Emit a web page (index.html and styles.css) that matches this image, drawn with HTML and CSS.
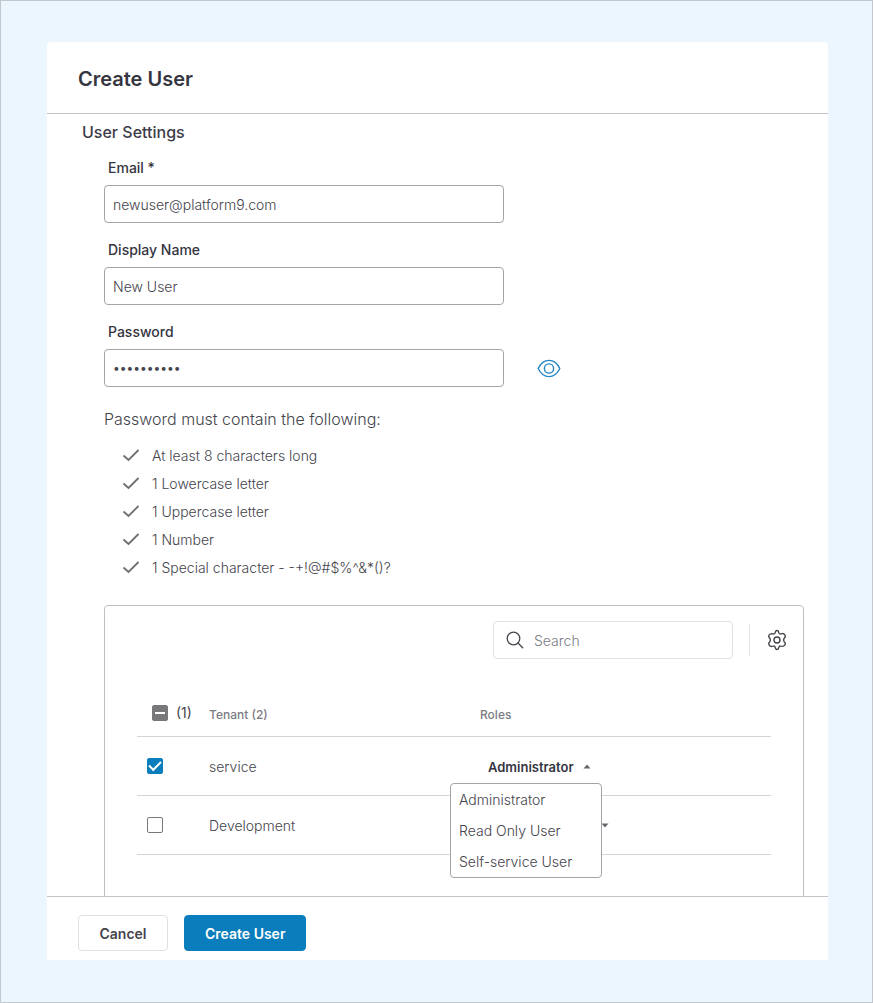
FILE: index.html
```html
<!DOCTYPE html>
<html lang="en">

<head>
  <meta charset="UTF-8" />
  <meta name="viewport" content="width=device-width, initial-scale=1.0" />
  <title>Create User</title>
  <link rel="stylesheet" href="styles.css">
</head>

<body>
  <form class="dialog">
    <header class="dialog-header">
      <h1>Create User</h1>
    </header>

    <main class="dialog-body">
      <h2>User Settings</h2>

      <div class="settings">
        <div class="field">
          <label for="email">Email *</label>
          <input type="email" id="email" value="newuser@platform9.com" required />
        </div>
        <div class="field">
          <label for="displayName">Display Name</label>
          <input type="text" id="displayName" value="New User" />
        </div>
        <div class="field">
          <label for="password">Password</label>
          <div class="password-row">
            <input type="password" id="password" value="Passw0rd-1" autocomplete="new-password" />
            <button type="button" class="icon-button eye" id="togglePassword" aria-label="Show password">
              <svg width="24" height="20" viewBox="0 0 24 20" fill="none" stroke="currentColor" stroke-width="1.4">
                <path d="M1.200 10.500C3.600 5.500 7.400 2.400 12 2.400S20.400 5.500 22.800 10.500C20.400 15.500 16.600 18.600 12 18.600S3.600 15.500 1.200 10.500Z" />
                <circle cx="12" cy="10.500" r="4.600" />
              </svg>
            </button>
          </div>
        </div>

        <p class="rules-title">Password must contain the following:</p>
        <ul class="rules">
          <li><svg class="tick" viewBox="0 0 18 14"><path d="M1.500 6.500L6.500 11L16.500 1" /></svg>At least 8 characters long</li>
          <li><svg class="tick" viewBox="0 0 18 14"><path d="M1.500 6.500L6.500 11L16.500 1" /></svg>1 Lowercase letter</li>
          <li><svg class="tick" viewBox="0 0 18 14"><path d="M1.500 6.500L6.500 11L16.500 1" /></svg>1 Uppercase letter</li>
          <li><svg class="tick" viewBox="0 0 18 14"><path d="M1.500 6.500L6.500 11L16.500 1" /></svg>1 Number</li>
          <li><svg class="tick" viewBox="0 0 18 14"><path d="M1.500 6.500L6.500 11L16.500 1" /></svg>1 Special character - -+!@#$%^&amp;*()?</li>
        </ul>

        <section class="tenants">
          <div class="toolbar">
            <label class="search">
              <svg width="18" height="18" viewBox="0 0 18 18" fill="none" stroke="currentColor" stroke-width="1.3" stroke-linecap="round">
                <circle cx="7.500" cy="7.500" r="6.300" />
                <path d="M12 12L16.700 16.700" />
              </svg>
              <input type="search" placeholder="Search" aria-label="Search tenants" />
            </label>
            <button type="button" class="icon-button gear" aria-label="Table settings">
              <svg width="22" height="22" viewBox="0 0 22 22" fill="none" stroke="currentColor" stroke-width="1.400" stroke-linejoin="round">
                <path d="M9.300 3.200Q9.700 1.500 11 1.500T12.700 3.200L13.100 4.300Q13.500 5.100 14.500 4.900L16.200 4.600Q17.800 4.400 18.800 5.900T19 8.300L18 9.600Q17.200 11 18 12.400L19 13.700Q19.800 14.900 18.800 16.100T16.200 17.400L14.500 17.100Q13.500 16.900 13.100 17.700L12.700 18.800Q12.300 20.500 11 20.500T9.300 18.800L8.900 17.700Q8.500 16.900 7.500 17.100L5.800 17.400Q4.200 17.600 3.200 16.100T3 13.700L4 12.400Q4.800 11 4 9.600L3 8.300Q2.200 7.100 3.200 5.900T5.800 4.600L7.500 4.900Q8.500 5.100 8.900 4.300Z" />
                <circle cx="11" cy="11" r="3" />
              </svg>
            </button>
          </div>

          <table>
            <thead>
              <tr>
                <th class="col-check">
                  <label class="check-all">
                    <input type="checkbox" id="checkAll" aria-label="Select all tenants" />
                    <span>(1)</span>
                  </label>
                </th>
                <th class="col-tenant">Tenant (2)</th>
                <th>Roles</th>
              </tr>
            </thead>
            <tbody>
              <tr>
                <td class="col-check"><input type="checkbox" aria-label="service" checked /></td>
                <td>service</td>
                <td>
                  <div class="role">
                    <select aria-label="Role for service">
                      <option>Administrator</option>
                    </select>
                    <svg class="caret" viewBox="0 0 8 5"><path d="M0.500 4.500L4 0.500L7.500 4.500Z" /></svg>
                    <ul class="role-menu">
                      <li><button type="button">Administrator</button></li>
                      <li><button type="button">Read Only User</button></li>
                      <li><button type="button">Self-service User</button></li>
                    </ul>
                  </div>
                </td>
              </tr>
              <tr>
                <td class="col-check"><input type="checkbox" aria-label="Development" /></td>
                <td>Development</td>
                <td>
                  <div class="role">
                    <select aria-label="Role for Development">
                      <option>Read Only User</option>
                    </select>
                    <svg class="caret" viewBox="0 0 8 5"><path d="M0.500 0.500L4 4.500L7.500 0.500Z" /></svg>
                  </div>
                </td>
              </tr>
            </tbody>
          </table>
        </section>
      </div>
    </main>

    <footer class="dialog-footer">
      <button type="button" class="btn">Cancel</button>
      <button type="submit" class="btn btn-primary">Create User</button>
    </footer>
  </form>

  <script>
    document.getElementById("checkAll").indeterminate = true;

    const password = document.getElementById("password");
    document.getElementById("togglePassword").addEventListener("click", () => {
      password.type = password.type === "password" ? "text" : "password";
    });
  </script>
</body>

</html>
```
FILE: styles.css
```css
* {
  box-sizing: border-box;
}

body {
  margin: 0;
  height: 100vh;
  display: flex;
  padding: 41px 44px 42px 46px;
  border: 1px solid #c2c8ce;
  background: #ebf6ff;
  color: #44444c;
  font-family: Inter, "Liberation Sans", sans-serif;
  font-size: 14px;
  font-weight: 300;
  line-height: 20px;
}

input,
select,
button {
  font: inherit;
  color: inherit;
}

h1,
h2,
p,
ul {
  margin: 0;
  padding: 0;
}

ul {
  list-style: none;
}

.dialog {
  flex: 1;
  display: flex;
  flex-direction: column;
  min-width: 0;
  background: #fff;
  border-radius: 4px 4px 0 0;
}

.dialog-header {
  padding: 25px 31px 22px;
  border-bottom: 1px solid #c3c4c7;
}

h1 {
  color: #35353f;
  font-size: 20px;
  font-weight: 600;
  line-height: 24px;
}

.dialog-body {
  flex: 1;
  min-height: 0;
  overflow: hidden;
  padding: 8px 24px 0 35px;
}

h2 {
  color: #3c3c48;
  font-size: 16px;
  font-weight: 500;
}

.settings {
  padding: 16px 0 0 22px;
}

.field {
  margin-bottom: 17px;
}

.field label {
  display: block;
  margin-bottom: 7px;
  padding-left: 4px;
  color: #35353f;
  font-weight: 500;
}

.field input {
  display: block;
  width: 100%;
  max-width: 400px;
  height: 38px;
  padding: 0 8px;
  border: 1px solid #a3a4a8;
  border-radius: 4px;
  background: #fff;
}

.field input[type="password"] {
  padding-bottom: 2px;
  font-size: 12px;
  font-weight: 400;
}

.password-row {
  display: flex;
  align-items: center;
  gap: 33px;
}

.icon-button {
  display: flex;
  padding: 0;
  border: 0;
  background: none;
  cursor: pointer;
}

.eye {
  color: #2385c4;
}

.rules-title {
  margin-top: 20px;
  font-size: 16px;
  line-height: 24px;
}

.rules {
  margin: 11px 0 23px 18px;
}

.rules li {
  display: flex;
  align-items: center;
  gap: 12px;
  height: 28px;
}

.tick {
  width: 18px;
  height: 14px;
  fill: none;
  stroke: #6e6e73;
  stroke-width: 1.8;
}

.tenants {
  height: 400px;
  border: 1px solid #bfc0c4;
  border-radius: 4px;
}

.toolbar {
  display: flex;
  justify-content: flex-end;
  align-items: center;
  gap: 16px;
  padding: 15px 15px 0;
}

.search {
  display: flex;
  align-items: center;
  gap: 10px;
  width: 240px;
  height: 38px;
  padding: 0 12px;
  border: 1px solid #dfe0e3;
  border-radius: 4px;
}

.search input {
  flex: 1;
  min-width: 0;
  padding: 2px 0 0;
  border: 0;
  outline: 0;
  background: none;
}

.search input::placeholder {
  color: #7c7c83;
}

.gear {
  align-items: center;
  height: 32px;
  padding-left: 16px;
  border-left: 1px solid #dfe0e3;
}

table {
  width: calc(100% - 64px);
  margin: 32px 32px 0;
  border-collapse: collapse;
  table-layout: fixed;
}

th,
td {
  padding: 0;
  border-bottom: 1px solid #d3d4d7;
  text-align: left;
}

th {
  height: 45px;
  padding-top: 3px;
  color: #7c7c83;
  font-size: 12px;
  font-weight: 500;
}

td {
  height: 59px;
  padding-top: 2px;
}

.col-check {
  width: 72px;
  padding: 0 0 0 10px;
}

.col-tenant {
  width: 271px;
}

.check-all {
  display: flex;
  align-items: center;
  gap: 8px;
  padding-left: 5px;
  color: #44444c;
  font-size: 14px;
  font-weight: 400;
}

input[type="checkbox"] {
  appearance: none;
  display: grid;
  place-items: center;
  width: 16px;
  height: 16px;
  margin: 0;
  border: 1px solid #77777c;
  border-radius: 2px;
  background: #fff;
}

input[type="checkbox"]:checked {
  border-color: #0a7dbd;
  background: #0a7dbd;
}

input[type="checkbox"]:checked::after {
  content: "";
  width: 10px;
  height: 5px;
  margin-bottom: 3px;
  border: solid #fff;
  border-width: 0 0 2px 2px;
  transform: rotate(-45deg);
}

input[type="checkbox"]:indeterminate {
  border-color: #77777c;
  background: #77777c;
}

input[type="checkbox"]:indeterminate::after {
  content: "";
  width: 10px;
  height: 2px;
  background: #fff;
}

.role {
  position: relative;
  display: flex;
  align-items: center;
  gap: 8px;
  height: 20px;
  padding-left: 8px;
}

.role select {
  appearance: none;
  min-width: 87px;
  padding: 0;
  border: 0;
  background: none;
  color: #35353f;
  font-size: 13px;
  font-weight: 600;
}

.caret {
  width: 8px;
  height: 5px;
  fill: #66666c;
}

/* opens over the row below */
.role-menu {
  position: absolute;
  top: calc(100% + 6px);
  left: -30px;
  z-index: 1;
  width: 152px;
  border: 1px solid #a3a4a8;
  border-radius: 4px;
  background: #fff;
}

.role-menu button {
  display: block;
  width: 100%;
  height: 31px;
  padding: 2px 8px 0;
  border: 0;
  background: none;
  text-align: left;
}

tr:last-child .role {
  gap: 16px;
}

.dialog-footer {
  display: flex;
  gap: 16px;
  padding: 18px 31px 9px;
  border-top: 1px solid #c3c4c7;
}

.btn {
  min-width: 90px;
  height: 36px;
  padding: 1px 20px 0;
  border: 1px solid #dfe0e3;
  border-radius: 4px;
  background: #fff;
  font-weight: 600;
}

.btn-primary {
  border-color: #0a7dbd;
  background: #0a7dbd;
  color: #fff;
}
```
